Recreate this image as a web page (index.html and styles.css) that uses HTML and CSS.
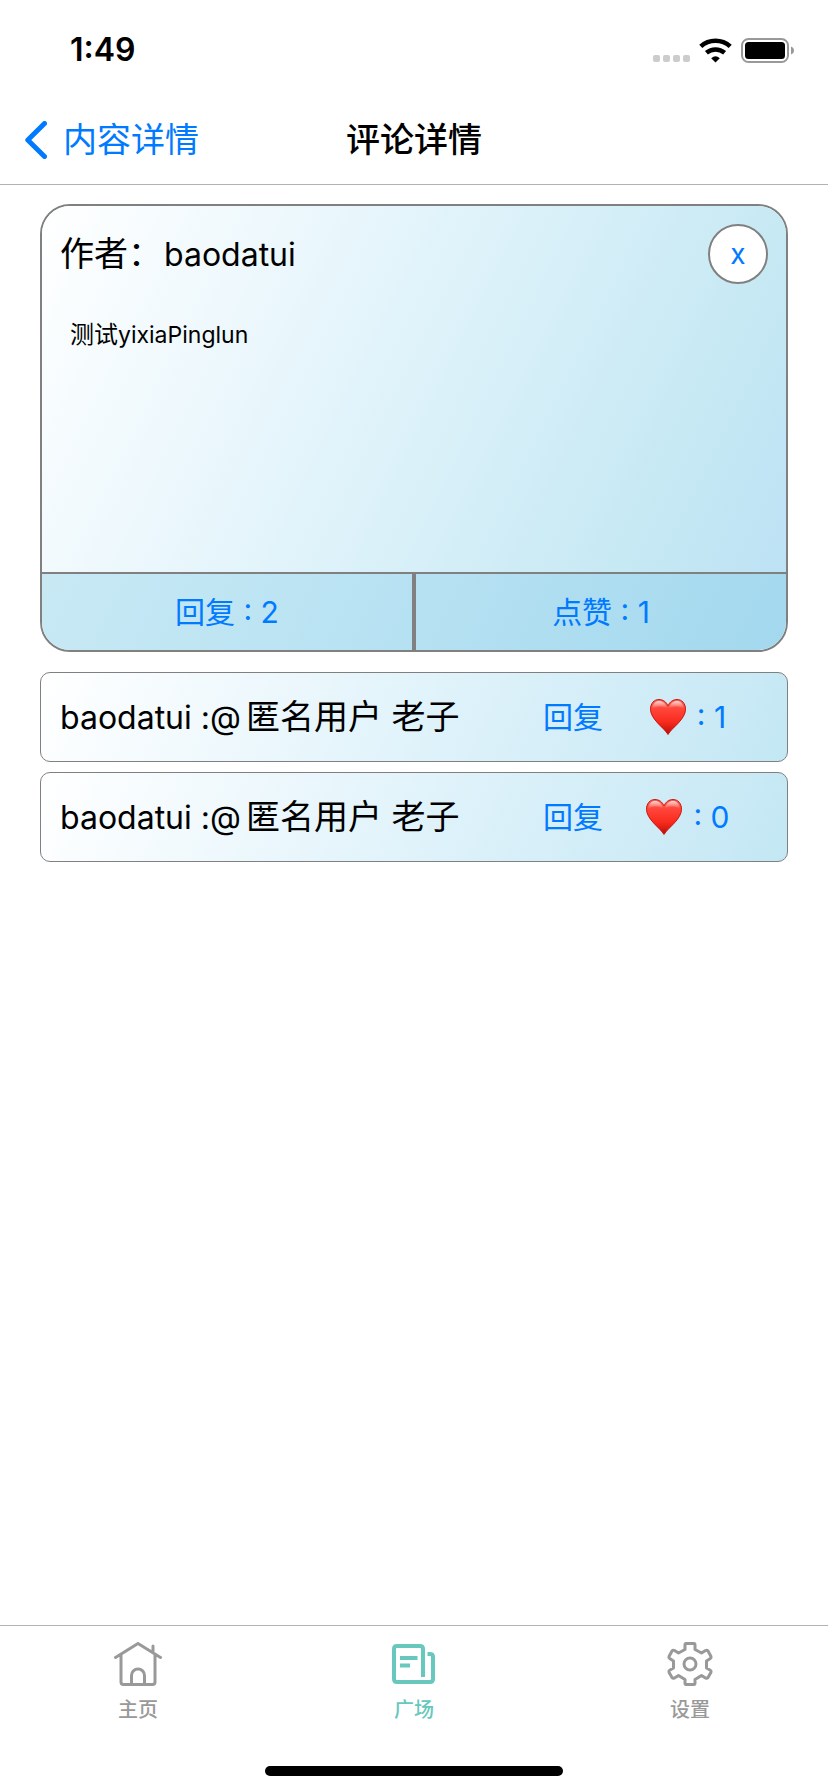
FILE: index.html
```html
<!DOCTYPE html>
<html lang="zh-CN">
<head>
<meta charset="utf-8">
<meta name="viewport" content="width=device-width">
<title>评论详情</title>
<link rel="stylesheet" href="styles.css">
</head>
<body>
<div class="screen">
  <div class="status">
    <span class="time">1:49</span>
    <div class="indicators">
      <svg class="signal" width="37" height="8" viewBox="0 0 37 8" fill="#ccc" aria-hidden="true">
        <rect x="0" y="0" width="7" height="7" rx="2"/><rect x="10" y="0" width="7" height="7" rx="2"/><rect x="20" y="0" width="7" height="7" rx="2"/><rect x="30" y="0" width="7" height="7" rx="2"/>
      </svg>
      <svg class="wifi" width="33" height="25" viewBox="0 0 33 25" fill="none" stroke="#000" stroke-width="4.6" aria-hidden="true">
        <path d="M1.800 8.400C10 .9 22.900 .9 31.200 8.400"/>
        <path d="M7.400 14.800C12.700 10.400 20.300 10.400 25.600 14.800"/>
        <path d="M16.500 24.500 12.200 20.200Q16.500 16.400 20.800 20.200Z" fill="#000" stroke="none"/>
      </svg>
      <svg class="battery" width="53" height="25" viewBox="0 0 53 25" aria-hidden="true">
        <rect x="1" y="1" width="46" height="23" rx="6.500" fill="none" stroke="#999" stroke-width="2"/>
        <rect x="4" y="4" width="40" height="17" rx="3.500"/>
        <path d="M50 8.500q3 1.200 3 4t-3 4z" fill="#999"/>
      </svg>
    </div>
  </div>

  <header class="nav">
    <a class="back" href="#">
      <svg width="22" height="38" viewBox="0 0 22 38" fill="none" stroke="currentColor" stroke-width="5" stroke-linecap="round" stroke-linejoin="round" aria-hidden="true"><path d="M19.500 2.500 2.800 19 19.500 35.500"/></svg>
      <span>内容详情</span>
    </a>
    <h1 class="title">评论详情</h1>
  </header>

  <main class="content">
    <article class="card">
      <div class="card-body">
        <div class="card-head">
          <h2 class="author">作者：<span class="name">baodatui</span></h2>
          <button class="close" type="button">x</button>
        </div>
        <p class="message">测试<span class="message-latin">yixiaPinglun</span></p>
      </div>
      <div class="card-actions">
        <button class="action" type="button">回复 : 2</button>
        <button class="action" type="button">点赞 : 1</button>
      </div>
    </article>

    <ul class="replies">
      <li class="reply">
        <span class="reply-text"><span class="name mention">baodatui :@</span>匿名用户 老子</span>
        <button class="reply-button" type="button">回复</button>
        <button class="like-button" type="button">
          <svg class="heart" viewBox="0 0 36 36" role="img" aria-label="喜欢"><use href="#heart"/></svg>
          <span>: 1</span>
        </button>
      </li>
      <li class="reply">
        <span class="reply-text"><span class="name mention">baodatui :@</span>匿名用户 老子</span>
        <button class="reply-button" type="button">回复</button>
        <button class="like-button" type="button">
          <svg class="heart" viewBox="0 0 36 36" role="img" aria-label="喜欢"><use href="#heart"/></svg>
          <span>: 0</span>
        </button>
      </li>
    </ul>
  </main>

  <nav class="tabs">
    <div class="tab-list">
      <a class="tab" href="#">
        <svg width="48" height="46" viewBox="0 0 48 46" fill="none" stroke="currentColor" stroke-width="3" stroke-linecap="round" stroke-linejoin="round" aria-hidden="true">
          <path d="M1.500 16.500 24 2.500 46.500 16.500M39 11V5M7 14V41Q7 43.500 9.500 43.500H38.500Q41 43.500 41 41V14"/><path d="M17.500 43V34.500a6.500 6.500 0 0 1 13 0V43"/>
        </svg>
        <span>主页</span>
      </a>
      <a class="tab tab-active" href="#" aria-current="page">
        <svg width="48" height="46" viewBox="2 0 48 46" fill="none" stroke="currentColor" stroke-width="4" stroke-linejoin="round" aria-hidden="true">
          <path d="M35 36V8Q35 5 32 5H9Q6 5 6 8V38Q6 41 9 41H42Q45 41 45 38V16Q45 13 42 13H39.500"/><path d="M12 17H29.500M12 24.500H22"/>
        </svg>
        <span>广场</span>
      </a>
      <a class="tab" href="#">
        <svg width="48" height="46" viewBox="0 0 48 46" fill="none" stroke="currentColor" stroke-width="3" stroke-linejoin="round" aria-hidden="true">
          <path d="M20 2.500H28Q29 2.500 29 4V8.500L35.500 12 39.500 9.500Q41 8.700 42 10L45 15.500Q45.500 16.700 44.300 17.500L40.500 20V27L44.300 29.200Q45.500 30 45 31.200L42 36.500Q41 37.800 39.500 37L35.500 34.500 29 38.500V42Q29 43.500 28 43.500H20Q19 43.500 19 42V38.500L12.500 34.500 8.500 37Q7 37.800 6 36.500L3 31.200Q2.500 30 3.700 29.200L7.500 27V20L3.700 17.500Q2.500 16.700 3 15.500L6 10Q7 8.700 8.500 9.500L12.500 12 19 8.500V4Q19 2.500 20 2.500Z"/><circle cx="24" cy="23" r="6"/>
        </svg>
        <span>设置</span>
      </a>
    </div>
    <div class="home-indicator"></div>
  </nav>
</div>

<svg class="symbols" width="0" height="0" aria-hidden="true">
  <defs>
    <linearGradient id="heart-fill" x1="0" y1="0" x2="0" y2="1">
      <stop offset="0" stop-color="#ff6055"/><stop offset=".3" stop-color="#ff4438"/><stop offset=".65" stop-color="#f92a1e"/><stop offset="1" stop-color="#b90f08"/>
    </linearGradient>
    <linearGradient id="heart-shine" x1="0" y1="0" x2="0" y2="1">
      <stop offset="0" stop-color="#fff" stop-opacity=".75"/><stop offset="1" stop-color="#fff" stop-opacity="0"/>
    </linearGradient>
    <symbol id="heart" viewBox="0 0 36 36">
      <path d="M18 35.500C14 28.500 .5 20.500 .5 10.200.5 4.300 4.200.5 9 .5 13 .5 16.400 3 18 6.800 19.600 3 23 .5 27 .5c4.800 0 8.500 3.800 8.500 9.700C35.500 20.500 22 28.500 18 35.500Z" fill="url(#heart-fill)" stroke="#c9180f"/>
      <path d="M2.300 9.500C2.700 4.500 5.500 2 9 2c3.700 0 6.700 2.500 8.200 7-4-2-10-2.500-14.900.5ZM33.700 9.500C33.300 4.500 30.500 2 27 2c-3.700 0-6.700 2.500-8.200 7 4-2 10-2.500 14.900.5Z" fill="url(#heart-shine)"/>
    </symbol>
  </defs>
</svg>
</body>
</html>
```
FILE: styles.css
```css
* {
  box-sizing: border-box;
}

body {
  margin: 0;
  background: #fff;
  color: #000;
  font-family: Inter, "Noto Sans CJK SC", sans-serif;
}

h1, h2, p, ul {
  margin: 0;
  padding: 0;
  font-weight: 400;
}

button {
  margin: 0;
  padding: 0;
  border: 0;
  background: none;
  color: #007aff;
  font: inherit;
  font-size: 30px;
  line-height: 40px;
}

a {
  color: #007aff;
  text-decoration: none;
}

svg {
  display: block;
  flex: none;
}

.symbols {
  position: absolute;
}

.screen {
  display: flex;
  flex-direction: column;
  min-height: 100vh;
}

.status {
  display: flex;
  justify-content: space-between;
  align-items: center;
  padding: 30px 34px 18px 70px;
}

.time {
  font-size: 32px;
  line-height: 40px;
  font-weight: 600;
}

.indicators {
  display: flex;
  align-items: flex-end;
  gap: 9px;
}

.nav {
  display: grid;
  grid-template-columns: 1fr auto 1fr;
  align-items: center;
  padding: 28px 25px 20px;
  border-bottom: 1px solid #b2b2b2;
  font-size: 34px;
  line-height: 48px;
}

.back {
  display: flex;
  align-items: center;
  gap: 16px;
}

.title {
  font-size: 34px;
  font-weight: 500;
}

.content {
  flex: 1;
  padding: 19px 40px;
}

.card {
  overflow: hidden;
  border: 2px solid #808080;
  border-radius: 30px;
}

.card-body {
  min-height: 366px;
  padding: 18px;
  background: linear-gradient(116deg, #fff, #e3f4fb 42%, #c7e9f4 81%, #bde2f4);
}

.card-head {
  display: flex;
  justify-content: space-between;
  align-items: center;
}

.author {
  font-size: 34px;
  line-height: 48px;
}

.name {
  font-size: 32px;
  line-height: 40px;
}

.author .name {
  margin-left: 2px;
}

.mention {
  margin-right: 5px;
}

.close {
  width: 60px;
  height: 60px;
  border: 2px solid #808080;
  border-radius: 50%;
  background: #fff;
  font-size: 28px;
}

.message {
  padding: 33px 10px;
  font-size: 24px;
  line-height: 36px;
}

.message-latin {
  font-size: 23px;
  line-height: 30px;
}

.card-actions {
  display: grid;
  grid-template-columns: 1fr 1fr;
  border-top: 2px solid #808080;
  background: linear-gradient(116deg, #c8e9f4, #b6e1f2 50%, #a3d8ee);
}

.action {
  padding: 18px 0;
  border-right: 2px solid #808080;
}

.action + .action {
  border-right: 0;
  border-left: 2px solid #808080;
}

.replies {
  display: grid;
  gap: 10px;
  margin-top: 20px;
  list-style: none;
}

.reply {
  display: grid;
  grid-template-columns: 1fr 70px 160px;
  align-items: center;
  padding: 20px 19px;
  border: 1px solid #808080;
  border-radius: 10px;
  background: linear-gradient(116deg, #fff, #e1f3fb 50%, #c3e7f4);
}

.reply-text {
  font-size: 34px;
  line-height: 48px;
  white-space: nowrap;
}

.reply-button {
  white-space: nowrap;
}

.like-button {
  display: flex;
  justify-content: center;
  align-items: center;
  gap: 11px;
}

.heart {
  width: 36px;
  height: 36px;
}

.tabs {
  padding: 15px 0 16px;
  border-top: 1px solid #b2b2b2;
}

.tab-list {
  display: grid;
  grid-template-columns: repeat(3, 1fr);
}

.tab {
  display: flex;
  flex-direction: column;
  align-items: center;
  gap: 9px;
  color: #999;
  font-size: 20px;
  line-height: 28px;
  font-weight: 500;
}

.tab-active {
  color: #68c8bd;
}

.home-indicator {
  width: 36%;
  height: 10px;
  margin: 42px auto 0;
  border-radius: 5px;
  background: #000;
}
```
